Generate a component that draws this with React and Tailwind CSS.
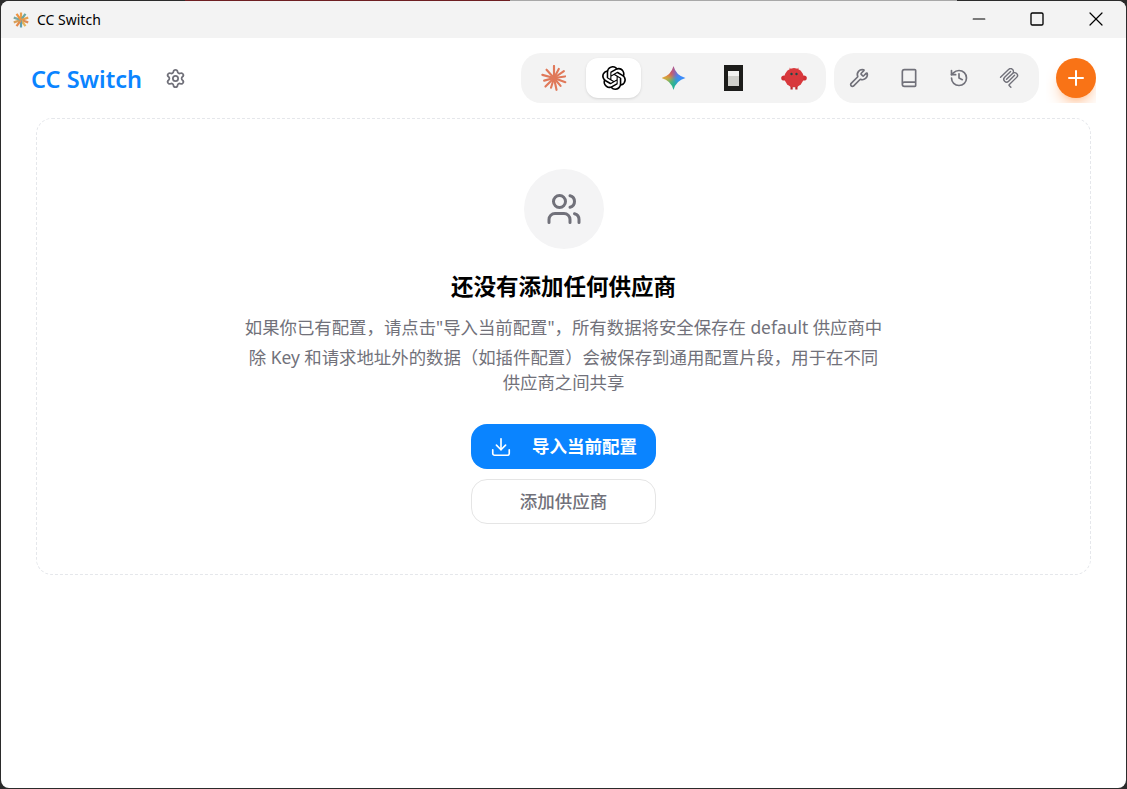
import { Settings, Wrench, Book, History, Users, Download, Plus, Minus, Square, X } from 'lucide-react';
import { SiOpenai } from 'react-icons/si';

const claudeRays = [
  [0, 13], [28, 11], [55, 13], [82, 12], [110, 13], [140, 11], [168, 13],
  [197, 11], [225, 13], [255, 11], [285, 13], [318, 12],
];

function ClaudeIcon() {
  return (
    <svg width="26" height="26" viewBox="0 0 28 28">
      {claudeRays.map(([deg, len]) => {
        const a = (deg * Math.PI) / 180;
        return (
          <line
            key={deg}
            x1="14"
            y1="14"
            x2={14 + Math.sin(a) * len}
            y2={14 - Math.cos(a) * len}
            stroke="#e0795a"
            strokeWidth="2.3"
            strokeLinecap="round"
          />
        );
      })}
    </svg>
  );
}

function AppLogo() {
  const colors = ['#e8a04c', '#6aa6a0', '#e8a04c', '#dd8a55', '#e3b35a', '#5f9fb0', '#e58a4a', '#d9a05a', '#7aa7a0', '#ee9440'];
  return (
    <svg width="16" height="16" viewBox="0 0 16 16">
      <circle cx="8" cy="8" r="3.5" fill="#e8964c" />
      {colors.map((c, i) => {
        const a = (i * 36 * Math.PI) / 180;
        return (
          <line key={i} x1="8" y1="8" x2={8 + Math.sin(a) * 7.6} y2={8 - Math.cos(a) * 7.6} stroke={c} strokeWidth="2.2" />
        );
      })}
    </svg>
  );
}

function GeminiIcon() {
  return (
    <div className="w-6 h-6 overflow-hidden [clip-path:path('M12_0Q14.5_9.5_24_12Q14.5_14.5_12_24Q9.5_14.5_0_12Q9.5_9.5_12_0Z')]">
      <div className="w-6 h-6 blur-[1.5px] scale-125 bg-[conic-gradient(from_0deg,#b5568e_0deg,#4f7fea_35deg,#3b8bff_90deg,#2f9be0_135deg,#1fb58f_180deg,#4fb878_225deg,#e8b030_270deg,#d8574f_315deg,#b5568e_360deg)]" />
    </div>
  );
}

function NotebookIcon() {
  return (
    <div className="w-[19px] h-[26px] bg-[#1c1c1a] flex items-center justify-center">
      <div className="w-[11px] h-[15px] flex flex-col">
        <div className="h-[5px] bg-[#f2f2f0]" />
        <div className="flex-1 bg-[#cfcfca]" />
      </div>
    </div>
  );
}

function BirdIcon() {
  return (
    <svg width="26" height="26" viewBox="0 0 26 26">
      <path d="M8 3 L10.5 4.5 M18 3 L15.5 4.5" stroke="#e89a9a" strokeWidth="1" />
      <ellipse cx="3.2" cy="13" rx="3" ry="2.6" fill="#cf2f33" />
      <ellipse cx="22.8" cy="13" rx="3" ry="2.6" fill="#cf2f33" />
      <rect x="9.5" y="20" width="2.2" height="4.5" fill="#b52a2e" />
      <rect x="14.3" y="20" width="2.2" height="4.5" fill="#b52a2e" />
      <circle cx="13" cy="12.6" r="9.6" fill="#d8383c" />
      <circle cx="10.5" cy="9" r="1.2" fill="#1d4a48" />
      <circle cx="15.5" cy="9" r="1.2" fill="#1d4a48" />
    </svg>
  );
}

function McpIcon() {
  return (
    <svg width="20" height="20" viewBox="0 0 24 24" fill="currentColor">
      <path d="M15.688 2.343a2.588 2.588 0 00-3.61 0l-9.626 9.44a.863.863 0 01-1.203 0 .823.823 0 010-1.18l9.626-9.44a4.313 4.313 0 016.016 0 4.116 4.116 0 011.204 3.54 4.3 4.3 0 013.609 1.18l.05.05a4.115 4.115 0 010 5.9l-8.706 8.537a.274.274 0 000 .393l1.788 1.754a.823.823 0 010 1.18.863.863 0 01-1.203 0l-1.788-1.753a1.92 1.92 0 010-2.754l8.706-8.538a2.47 2.47 0 000-3.54l-.05-.049a2.588 2.588 0 00-3.607-.003l-7.172 7.034-.002.002-.098.097a.863.863 0 01-1.204 0 .823.823 0 010-1.18l7.273-7.133a2.47 2.47 0 00-.003-3.537z" />
      <path d="M14.485 4.703a.823.823 0 000-1.18.863.863 0 00-1.204 0l-7.119 6.982a4.115 4.115 0 000 5.9 4.314 4.314 0 006.016 0l7.12-6.982a.823.823 0 000-1.18.863.863 0 00-1.204 0l-7.119 6.982a2.588 2.588 0 01-3.61 0 2.47 2.47 0 010-3.54l7.12-6.982z" />
    </svg>
  );
}

export default function App() {
  return (
    <div className="relative h-screen bg-[#2b2b2b] p-px font-['Noto_Sans','Noto_Sans_CJK_SC',sans-serif]">
      {/* Desktop peeking through above the window */}
      <div className="absolute top-0 left-[185px] w-[325px] h-px bg-[#6e1f22]" />
      <div className="absolute top-0 left-[510px] w-[447px] h-px bg-[#a8a8a8]" />

      <div className="h-full bg-white rounded-lg overflow-hidden flex flex-col">
        {/* Title bar */}
        <div className="h-[37px] shrink-0 bg-[#f3f3f3] flex items-center justify-between">
          <div className="flex items-center pl-3 gap-2">
            <AppLogo />
            <span className="text-[14px] leading-none text-black">CC Switch</span>
          </div>
          <div className="flex items-center pr-[1px] -mt-[1px]">
            <button className="w-[58.5px] flex justify-center text-black"><Minus size={20} strokeWidth={1.3} /></button>
            <button className="w-[58.5px] flex justify-center text-black"><Square size={16} strokeWidth={2} /></button>
            <button className="w-[58.5px] flex justify-center text-black"><X size={24} strokeWidth={1.2} /></button>
          </div>
        </div>

        {/* Header */}
        <div className="flex items-center justify-between pl-[30px] pr-[30px] pt-[15px]">
          <div className="flex items-center gap-[23px]">
            <h1 className="text-[23.5px] leading-none font-semibold text-[#0a84ff] mt-[4px]">CC Switch</h1>
            <button className="text-[#71717a]"><Settings size={21} /></button>
          </div>

          <div className="flex items-center">
            <div className="flex items-center gap-[5px] p-[5px] rounded-[20px] bg-[#f3f3f3]">
              <button className="w-[55px] h-10 flex items-center justify-center"><ClaudeIcon /></button>
              <button className="w-[55px] h-10 flex items-center justify-center bg-white rounded-xl text-black shadow-sm"><SiOpenai size={24} /></button>
              <button className="w-[55px] h-10 flex items-center justify-center"><GeminiIcon /></button>
              <button className="w-[55px] h-10 flex items-center justify-center"><NotebookIcon /></button>
              <button className="w-[55px] h-10 flex items-center justify-center"><BirdIcon /></button>
            </div>
            <div className="ml-2 flex items-center gap-[10px] p-[5px] pr-[10px] rounded-[20px] bg-[#f3f3f3] text-[#71717a]">
              <button className="w-10 h-10 flex items-center justify-center"><Wrench size={20} /></button>
              <button className="w-10 h-10 flex items-center justify-center"><Book size={20} /></button>
              <button className="w-10 h-10 flex items-center justify-center"><History size={20} /></button>
              <button className="w-10 h-10 flex items-center justify-center"><McpIcon /></button>
            </div>
            <div className="ml-[7px] overflow-hidden pl-[10px] py-[5px]">
              <button className="w-10 h-10 rounded-full bg-[#f97316] text-white flex items-center justify-center shadow-lg shadow-orange-500/30">
                <Plus size={24} />
              </button>
            </div>
          </div>
        </div>

        {/* Empty state */}
        <div className="mx-[35px] mt-[15px] border border-dashed border-[#e5e7eb] rounded-2xl p-[50px] flex flex-col items-center text-center">
          <div className="w-20 h-20 rounded-full bg-[#f4f4f5] flex items-center justify-center text-[#71717a] mb-6">
            <Users size={36} strokeWidth={2} />
          </div>
          <h3 className="text-[22.5px] leading-7 font-semibold text-black mb-[14px]">还没有添加任何供应商</h3>
          <p className="max-w-[640px] text-[17.4px] leading-[25px] text-[#71717a] mb-[5px]">
            如果你已有配置，请点击"导入当前配置"，所有数据将安全保存在 default 供应商中
          </p>
          <p className="max-w-[640px] text-[17.4px] leading-[25px] text-[#71717a] mb-[29px]">
            除 Key 和请求地址外的数据（如插件配置）会被保存到通用配置片段，用于在不同供应商之间共享
          </p>
          <button className="w-[185px] h-[45px] rounded-2xl bg-[#0a84ff] text-white text-[17.5px] font-semibold flex items-center justify-center gap-5">
            <Download size={22} strokeWidth={1.8} />
            导入当前配置
          </button>
          <button className="mt-[10px] w-[185px] h-[45px] rounded-2xl border border-[#e5e5e5] bg-white text-[#71717a] text-[17.5px] font-medium flex items-center justify-center">
            添加供应商
          </button>
        </div>
      </div>
    </div>
  );
}
